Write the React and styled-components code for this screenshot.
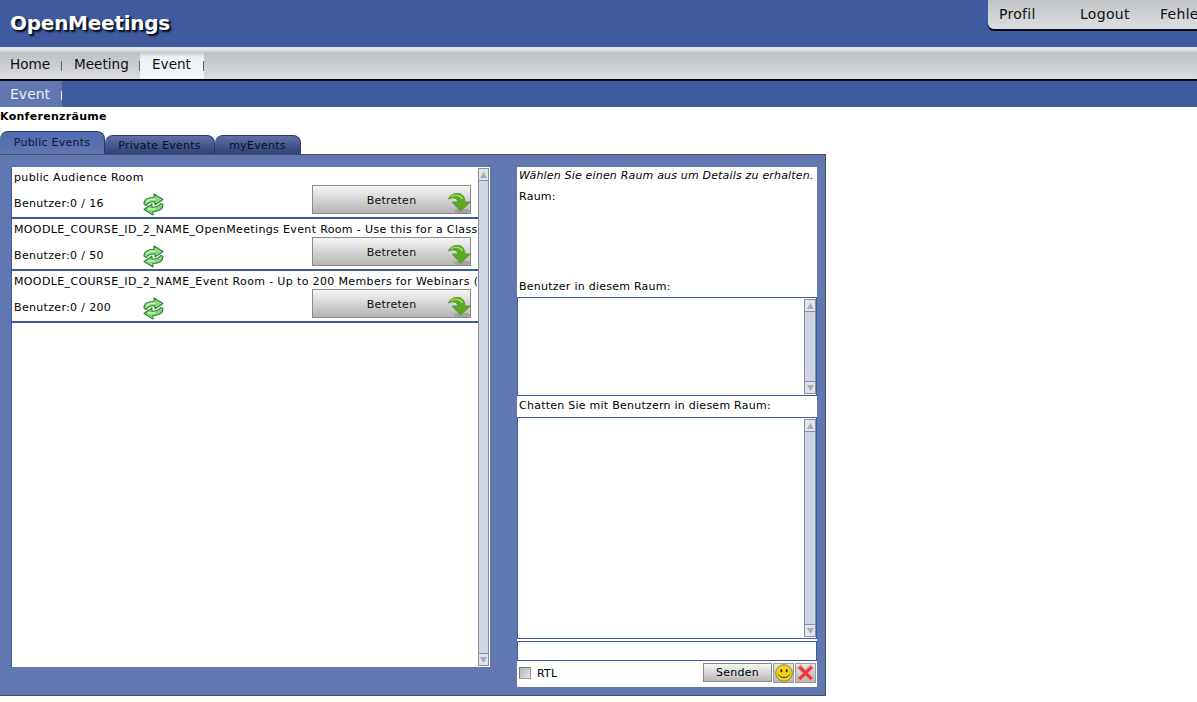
import React from 'react'
import styled, { createGlobalStyle } from 'styled-components'

const Global = createGlobalStyle`
  html, body { margin: 0; padding: 0; background: #fff; overflow: hidden; }
  body { font-family: "DejaVu Sans", Verdana, sans-serif; font-size: 11px; color: #000; letter-spacing: 0.25px; }
  * { box-sizing: border-box; }
`

const rooms = [
  { name: 'public Audience Room', users: 'Benutzer:0 / 16' },
  { name: 'MOODLE_COURSE_ID_2_NAME_OpenMeetings Event Room - Use this for a Class room', users: 'Benutzer:0 / 50' },
  { name: 'MOODLE_COURSE_ID_2_NAME_Event Room - Up to 200 Members for Webinars (Moodle)', users: 'Benutzer:0 / 200' },
]

function RefreshIcon() {
  return (
    <svg width="21" height="23" viewBox="0 0 21 23">
      <path d="M1 11 C1 6 5 4.500 11 4.500 L11 1 L20 6.500 L12 12 L12 8.800 C8 8.800 5 9.500 3.500 12.500 Z" fill="#86dc72" stroke="#2f7d42" strokeWidth="1.100" strokeLinejoin="round" />
      <path d="M20 11.500 C20 17 16 18.500 10 18.500 L10 22 L1 16.500 L9 11 L9 14.200 C13 14.200 16 13.500 17.500 10.500 Z" fill="#86dc72" stroke="#2f7d42" strokeWidth="1.100" strokeLinejoin="round" />
      <path d="M3.500 9 C5 7 8 6.300 12.500 6.300" fill="none" stroke="#e2fad8" strokeWidth="1.100" />
      <path d="M5 16 L12 16" fill="none" stroke="#e2fad8" strokeWidth="1.100" />
    </svg>
  )
}

function EnterIcon() {
  return (
    <svg width="24" height="21" viewBox="0 0 24 21">
      <ellipse cx="14" cy="18" rx="8" ry="2.500" fill="#8c8c8c" opacity="0.55" />
      <path d="M0.500 6 C2 1.500 7 0.300 10 0.300 C14 0.300 17 4 17 9 L22.500 9 L12.500 18 L4 9 L10 9 C10 6 6 3.500 0.500 6 Z" fill="#5da823" stroke="#4b8c1b" strokeWidth="0.700" strokeLinejoin="round" />
      <path d="M3 3.800 C6.500 1.300 12 1.300 14.500 6" fill="none" stroke="#a8de6c" strokeWidth="1.400" />
    </svg>
  )
}

function Smiley() {
  return (
    <svg width="18" height="18" viewBox="0 0 18 18">
      <circle cx="9" cy="9" r="8.300" fill="#f2d21e" stroke="#8a7a10" strokeWidth="0.900" />
      <ellipse cx="6.300" cy="6.800" rx="1" ry="1.700" fill="#3a3208" />
      <ellipse cx="11.700" cy="6.800" rx="1" ry="1.700" fill="#3a3208" />
      <path d="M3.500 10.500 C5 14.500 13 14.500 14.500 10.500" fill="none" stroke="#3a3208" strokeWidth="1" />
    </svg>
  )
}

function CrossIcon() {
  return (
    <svg width="19" height="18" viewBox="0 0 18 18">
      <path d="M1 4 L4 1 L9 6 L14 1 L17 4 L12 9 L17 14 L14 17 L9 12 L4 17 L1 14 L6 9 Z" fill="#e8343a" stroke="#e0a8a8" strokeWidth="1.300" strokeLinejoin="round" />
    </svg>
  )
}

function Scrollbar({ className }) {
  return (
    <Track className={className}>
      <ScrollButton>
        <svg width="7" height="6" viewBox="0 0 7 6"><path d="M3.500 0 L7 6 L0 6 Z" fill="#a6abb8" /></svg>
      </ScrollButton>
      <ScrollButton>
        <svg width="7" height="6" viewBox="0 0 7 6"><path d="M0 0 L7 0 L3.500 6 Z" fill="#a6abb8" /></svg>
      </ScrollButton>
    </Track>
  )
}

export default function App() {
  return (
    <Page>
      <Global />
      <Header>
        <Logo>OpenMeetings</Logo>
        <UserMenu>
          <UserLink>Profil</UserLink>
          <UserLink>Logout</UserLink>
          <UserLink>Fehler</UserLink>
        </UserMenu>
      </Header>
      <MainNav>
        <NavItem $first>Home<NavSep /></NavItem>
        <NavItem>Meeting<NavSep /></NavItem>
        <NavItem $active>Event<NavSep /></NavItem>
      </MainNav>
      <SubNav>
        <SubItem>Event<SubSep /></SubItem>
      </SubNav>
      <PageTitle>Konferenzräume</PageTitle>
      <Tabs>
        <Tab $active $width={105}>Public Events</Tab>
        <Tab $width={110}>Private Events</Tab>
        <Tab $width={86}>myEvents</Tab>
      </Tabs>
      <Panel>
        <ListColumn>
          <RoomList>
            {rooms.map(room => (
              <RoomRow key={room.name}>
                <RoomName>{room.name}</RoomName>
                <RoomMeta>
                  <UserCount>{room.users}</UserCount>
                  <RefreshSlot><RefreshIcon /></RefreshSlot>
                  <EnterButton>
                    Betreten
                    <EnterSlot><EnterIcon /></EnterSlot>
                  </EnterButton>
                </RoomMeta>
              </RoomRow>
            ))}
          </RoomList>
          <ListScroll />
        </ListColumn>
        <SideColumn>
          <Details>
            <Hint>Wählen Sie einen Raum aus um Details zu erhalten.</Hint>
            <DetailLabel>Raum:</DetailLabel>
            <UsersLabel>Benutzer in diesem Raum:</UsersLabel>
          </Details>
          <Box $height={99}><BoxScroll /></Box>
          <ChatLabel>Chatten Sie mit Benutzern in diesem Raum:</ChatLabel>
          <Box $height={222}><BoxScroll /></Box>
          <ChatInput />
          <ChatActions>
            <RtlCheck />
            <RtlLabel>RTL</RtlLabel>
            <SendButton>Senden</SendButton>
            <IconButton><Smiley /></IconButton>
            <IconButton><CrossIcon /></IconButton>
          </ChatActions>
        </SideColumn>
      </Panel>
    </Page>
  )
}

const Page = styled.div`
  width: 1197px;
  height: 702px;
  overflow: hidden;
`

const Header = styled.header`
  height: 47px;
  background: #3f5a9e;
  display: flex;
  justify-content: space-between;
  align-items: flex-start;
`

const Logo = styled.div`
  margin: 10px 0 0 10px;
  font-size: 20px;
  line-height: 26px;
  font-weight: bold;
  letter-spacing: -0.25px;
  color: #fff;
  text-shadow: 2px 2px 2px #060c20, 1px 1px 1px #060c20;
`

const UserMenu = styled.nav`
  width: 209px;
  height: 29px;
  padding-left: 11px;
  display: flex;
  overflow: hidden;
  background: linear-gradient(#c2c5c7, #dcdee1);
  border-bottom-left-radius: 6px;
  box-shadow: 0 2px 0 #0a0a14;
  font-size: 14px;
  line-height: 28px;
  letter-spacing: 0.3px;
  color: #111;
`

const UserLink = styled.span`
  flex: 0 0 80px;
  white-space: nowrap;
  &:first-child { flex-basis: 81px; }
`

const MainNav = styled.nav`
  height: 34px;
  display: flex;
  background: linear-gradient(#e6e8f0 0, #e0e2e8 3px, #bfc2c4 6px, #dadcdf 32px, #000 32px, #0a0f20 34px);
  font-size: 13.6px;
  letter-spacing: 0;
`

const NavItem = styled.div`
  height: 32px;
  padding: 2px 0 0 ${p => (p.$first ? '10px' : '12px')};
  width: ${p => (p.$first ? '62px' : p.$active ? '64px' : '78px')};
  display: flex;
  justify-content: space-between;
  align-items: center;
  line-height: 30px;
  color: #111;
  background: ${p => (p.$active ? 'linear-gradient(transparent 5px, #eef1f4 10px, #f4f7f9 100%)' : 'none')};
`

const NavSep = styled.i`
  width: 1px;
  height: 10px;
  margin-top: 3px;
  background: #666;
`

const SubNav = styled.nav`
  height: 26px;
  background: #3f5a9e;
`

const SubItem = styled.div`
  width: 62px;
  height: 26px;
  padding-left: 10px;
  display: flex;
  justify-content: space-between;
  align-items: center;
  background: #6077b0;
  color: #e8ecf6;
  font-size: 14px;
  letter-spacing: 0;
`

const SubSep = styled.i`
  width: 1px;
  height: 9px;
  margin-top: 2px;
  background: #e8ecf6;
`

const PageTitle = styled.h1`
  margin: 0;
  height: 24px;
  font-size: 11px;
  line-height: 19px;
  font-weight: bold;
  letter-spacing: 0.3px;
`

const Tabs = styled.div`
  height: 23px;
  display: flex;
  align-items: flex-end;
`

const Tab = styled.div`
  width: ${p => p.$width}px;
  height: ${p => (p.$active ? '23px' : '19px')};
  text-align: center;
  font-size: 11px;
  line-height: ${p => (p.$active ? '21px' : '20px')};
  border-radius: 8px 8px 0 0;
  color: ${p => (p.$active ? '#0d1630' : '#0a1024')};
  background: ${p => (p.$active ? 'linear-gradient(#4f6bb0, #6077b0)' : 'linear-gradient(#5d70a8, #2f4377)')};
  border: 1px solid #2c3a63;
  border-width: 1px 1px 0 0;
`

const Panel = styled.main`
  width: 826px;
  height: 542px;
  padding: 12px 0 0 11px;
  display: flex;
  background: #6077b0;
  border: 1px solid #4a4f5c;
  border-left: 0;
`

const ListColumn = styled.section`
  width: 479px;
  height: 500px;
  display: flex;
  background: #fff;
  border-left: 1px solid #3f5a9e;
`

const RoomList = styled.div`
  width: 466px;
  height: 100%;
  overflow: hidden;
`

const RoomRow = styled.article`
  height: 52px;
  border-bottom: 2px solid #3f5a9e;
`

const RoomName = styled.div`
  height: 18px;
  padding-left: 2px;
  line-height: 22px;
  letter-spacing: 0.36px;
  white-space: nowrap;
  overflow: hidden;
`

const RoomMeta = styled.div`
  height: 30px;
  padding-left: 2px;
  display: flex;
  align-items: flex-start;
`

const UserCount = styled.span`
  width: 129px;
  padding-top: 12px;
  line-height: 14px;
  letter-spacing: 0.33px;
`

const RefreshSlot = styled.span`
  margin-top: 8px;
  line-height: 0;
`

const EnterButton = styled.div`
  width: 159px;
  height: 29px;
  margin: 0 7px 0 auto;
  position: relative;
  text-align: center;
  line-height: 29px;
  background: linear-gradient(#f6f6f6, #b4b4b4);
  border: 1px solid #8a8a8a;
  color: #111;
`

const EnterSlot = styled.span`
  position: absolute;
  right: -2px;
  top: 7px;
  line-height: 0;
`

const Track = styled.div`
  width: 12px;
  flex: none;
  display: flex;
  flex-direction: column;
  justify-content: space-between;
  background: #cfd6e8;
  border: 1px solid #8a8f9c;
`

const ScrollButton = styled.div`
  height: 12px;
  display: flex;
  align-items: center;
  justify-content: center;
  background: #dfe3ec;
  border-bottom: 1px solid #8a8f9c;
  &:last-child {
    border-bottom: 0;
    border-top: 1px solid #8a8f9c;
  }
`

const ListScroll = styled(Scrollbar)`
  width: 11px;
  margin: 1px 1px 1px 0;
`

const SideColumn = styled.aside`
  width: 300px;
  margin-left: 27px;
  display: flex;
  flex-direction: column;
`

const Details = styled.div`
  height: 130px;
  background: #fff;
  padding-left: 2px;
  display: flex;
  flex-direction: column;
`

const Hint = styled.div`
  font-style: italic;
  line-height: 18px;
  letter-spacing: 0.18px;
  white-space: nowrap;
`

const DetailLabel = styled.div`
  margin-top: 3px;
  line-height: 18px;
`

const UsersLabel = styled.div`
  margin-top: auto;
  line-height: 18px;
  padding-bottom: 1px;
`

const Box = styled.div`
  height: ${p => p.$height}px;
  padding: 1px 0 1px 0;
  display: flex;
  justify-content: flex-end;
  background: #fff;
  border: 1px solid #3f5a9e;
`

const BoxScroll = styled(Scrollbar)`
  height: 100%;
`

const ChatLabel = styled.div`
  height: 21px;
  padding-left: 2px;
  line-height: 20px;
  background: #fff;
`

const ChatInput = styled.div`
  height: 20px;
  margin-top: 2px;
  background: #fff;
  border: 1px solid #3f5a9e;
  box-shadow: 0 -2px 0 #fff;
`

const ChatActions = styled.div`
  height: 26px;
  padding: 0 1px 3px 2px;
  display: flex;
  align-items: center;
  background: #fff;
`

const RtlCheck = styled.span`
  width: 12px;
  height: 12px;
  background: linear-gradient(135deg, #b4b4b4, #e4e4e4);
  border: 1px solid #9a9a9a;
  border-top-color: #777;
  border-left-color: #777;
`

const RtlLabel = styled.span`
  margin: 2px 0 0 6px;
`

const SendButton = styled.div`
  width: 69px;
  height: 19px;
  margin-left: auto;
  text-align: center;
  line-height: 18px;
  background: linear-gradient(#f6f6f6, #b8b8b8);
  border: 1px solid #8a8a8a;
`

const IconButton = styled.div`
  width: 21px;
  height: 20px;
  margin-left: 1px;
  display: flex;
  align-items: center;
  justify-content: center;
  background: linear-gradient(#e8e8e8, #b8b8b8);
  border: 1px solid #9a9a9a;
`
